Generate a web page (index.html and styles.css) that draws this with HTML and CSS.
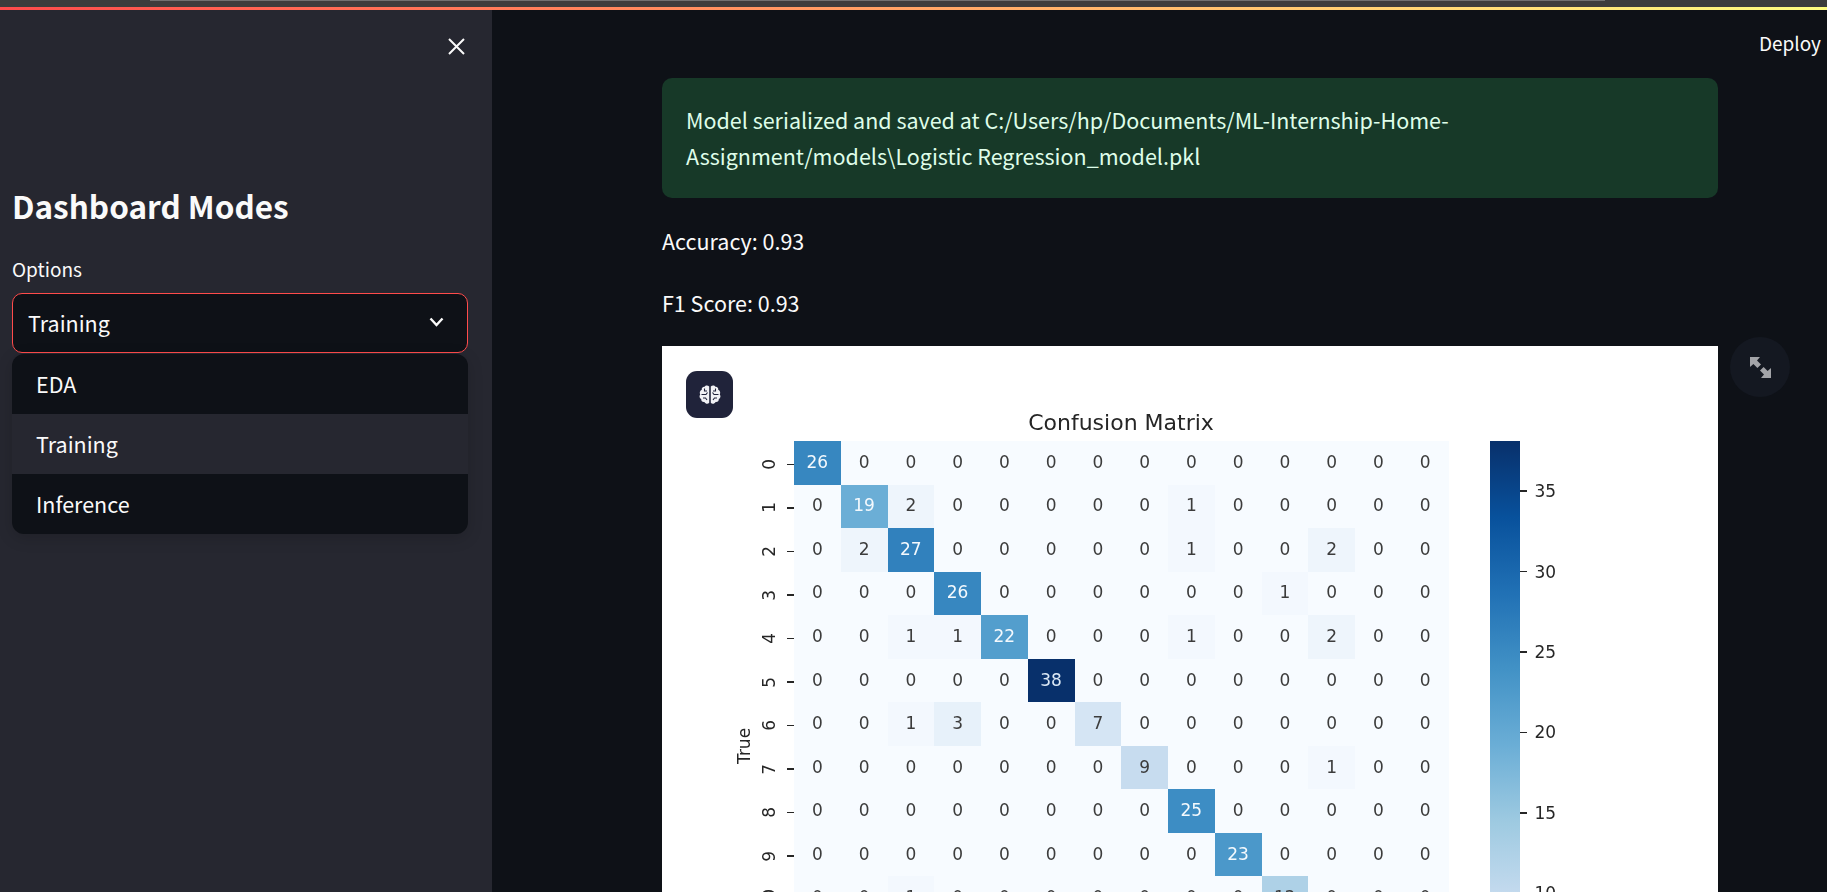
FILE: index.html
```html
<!DOCTYPE html>
<html lang="en">
<head>
  <meta charset="UTF-8">
  <title>Dashboard Modes</title>
  <link rel="stylesheet" href="styles.css">
</head>
<body>

<div class="browserStrip"><div class="browserStripLine"></div></div>
<div class="decoration"></div>

<div class="app">
  <aside class="sidebar">
    <div class="closeRow">
      <svg class="closeIcon" viewBox="0 0 17 17"><path d="M1 1 L16 16 M16 1 L1 16"/></svg>
    </div>
    <h2 class="sidebarTitle">Dashboard Modes</h2>
    <label class="fieldLabel">Options</label>
    <div class="selectBox">
      <span>Training</span>
      <svg class="chevron" viewBox="0 0 15 10"><path d="M1.5 1.5 L7.5 8 L13.5 1.5"/></svg>
    </div>
    <ul class="menu">
      <li class="menuItem">EDA</li>
      <li class="menuItem active">Training</li>
      <li class="menuItem">Inference</li>
    </ul>
  </aside>

  <main class="main">
    <header class="topRow"><span class="deploy">Deploy</span></header>
    <div class="content">
      <div class="alert">Model serialized and saved at C:/Users/hp/Documents/ML-Internship-Home-Assignment/models\Logistic Regression_model.pkl</div>
      <p class="metric">Accuracy: 0.93</p>
      <p class="metric">F1 Score: 0.93</p>

      <div class="plotWrap">
        <div class="plot">
          <div class="brainBtn">
            <svg viewBox="0 0 22 20" class="brainIcon">
              <path class="lobe" d="M10.2 1.6 C8.8 0 6.4 0.2 5.6 1.8 C3.8 1.6 2.4 3 2.8 4.8 C1 5.6 0.2 7.6 1.2 9.4 C0 11 0.4 13.2 2.2 14 C2 16 3.6 17.4 5.4 17 C6.4 19 9 19.4 10.2 17.8 Z"/>
              <path class="lobe" d="M11.8 1.6 C13.2 0 15.6 0.2 16.4 1.8 C18.2 1.6 19.6 3 19.2 4.8 C21 5.6 21.8 7.6 20.8 9.4 C22 11 21.6 13.2 19.8 14 C20 16 18.4 17.4 16.6 17 C15.6 19 13 19.4 11.8 17.8 Z"/>
              <path class="fold" d="M2.5 9.5 H7 L8.5 7.5 M5.5 3.5 V6 H8 M4 13 H6.5 L8 15 M19.5 9.5 H15 L13.5 7.5 M16.5 3.5 V6 H14 M18 13 H15.5 L14 15"/>
            </svg>
          </div>
          <div class="chart">
            <div class="chartTitle">Confusion Matrix</div>
            <div class="chartBody">
              <div class="yLabel">True</div>
              <div class="heatmap">
                <div class="yTick"><span>0</span></div><span class="cell v26">26</span><span class="cell">0</span><span class="cell">0</span><span class="cell">0</span><span class="cell">0</span><span class="cell">0</span><span class="cell">0</span><span class="cell">0</span><span class="cell">0</span><span class="cell">0</span><span class="cell">0</span><span class="cell">0</span><span class="cell">0</span><span class="cell">0</span>
                <div class="yTick"><span>1</span></div><span class="cell">0</span><span class="cell v19">19</span><span class="cell v2">2</span><span class="cell">0</span><span class="cell">0</span><span class="cell">0</span><span class="cell">0</span><span class="cell">0</span><span class="cell v1">1</span><span class="cell">0</span><span class="cell">0</span><span class="cell">0</span><span class="cell">0</span><span class="cell">0</span>
                <div class="yTick"><span>2</span></div><span class="cell">0</span><span class="cell v2">2</span><span class="cell v27">27</span><span class="cell">0</span><span class="cell">0</span><span class="cell">0</span><span class="cell">0</span><span class="cell">0</span><span class="cell v1">1</span><span class="cell">0</span><span class="cell">0</span><span class="cell v2">2</span><span class="cell">0</span><span class="cell">0</span>
                <div class="yTick"><span>3</span></div><span class="cell">0</span><span class="cell">0</span><span class="cell">0</span><span class="cell v26">26</span><span class="cell">0</span><span class="cell">0</span><span class="cell">0</span><span class="cell">0</span><span class="cell">0</span><span class="cell">0</span><span class="cell v1">1</span><span class="cell">0</span><span class="cell">0</span><span class="cell">0</span>
                <div class="yTick"><span>4</span></div><span class="cell">0</span><span class="cell">0</span><span class="cell v1">1</span><span class="cell v1">1</span><span class="cell v22">22</span><span class="cell">0</span><span class="cell">0</span><span class="cell">0</span><span class="cell v1">1</span><span class="cell">0</span><span class="cell">0</span><span class="cell v2">2</span><span class="cell">0</span><span class="cell">0</span>
                <div class="yTick"><span>5</span></div><span class="cell">0</span><span class="cell">0</span><span class="cell">0</span><span class="cell">0</span><span class="cell">0</span><span class="cell v38">38</span><span class="cell">0</span><span class="cell">0</span><span class="cell">0</span><span class="cell">0</span><span class="cell">0</span><span class="cell">0</span><span class="cell">0</span><span class="cell">0</span>
                <div class="yTick"><span>6</span></div><span class="cell">0</span><span class="cell">0</span><span class="cell v1">1</span><span class="cell v3">3</span><span class="cell">0</span><span class="cell">0</span><span class="cell v7">7</span><span class="cell">0</span><span class="cell">0</span><span class="cell">0</span><span class="cell">0</span><span class="cell">0</span><span class="cell">0</span><span class="cell">0</span>
                <div class="yTick"><span>7</span></div><span class="cell">0</span><span class="cell">0</span><span class="cell">0</span><span class="cell">0</span><span class="cell">0</span><span class="cell">0</span><span class="cell">0</span><span class="cell v9">9</span><span class="cell">0</span><span class="cell">0</span><span class="cell">0</span><span class="cell v1">1</span><span class="cell">0</span><span class="cell">0</span>
                <div class="yTick"><span>8</span></div><span class="cell">0</span><span class="cell">0</span><span class="cell">0</span><span class="cell">0</span><span class="cell">0</span><span class="cell">0</span><span class="cell">0</span><span class="cell">0</span><span class="cell v25">25</span><span class="cell">0</span><span class="cell">0</span><span class="cell">0</span><span class="cell">0</span><span class="cell">0</span>
                <div class="yTick"><span>9</span></div><span class="cell">0</span><span class="cell">0</span><span class="cell">0</span><span class="cell">0</span><span class="cell">0</span><span class="cell">0</span><span class="cell">0</span><span class="cell">0</span><span class="cell">0</span><span class="cell v23">23</span><span class="cell">0</span><span class="cell">0</span><span class="cell">0</span><span class="cell">0</span>
                <div class="yTick"><span>10</span></div><span class="cell">0</span><span class="cell">0</span><span class="cell v1">1</span><span class="cell">0</span><span class="cell">0</span><span class="cell">0</span><span class="cell">0</span><span class="cell">0</span><span class="cell">0</span><span class="cell">0</span><span class="cell v12">12</span><span class="cell">0</span><span class="cell">0</span><span class="cell">0</span>
              </div>
              <div class="colorbar"></div>
              <div class="cbarTicks">
                <span class="cbarTick">35</span>
                <span class="cbarTick">30</span>
                <span class="cbarTick">25</span>
                <span class="cbarTick">20</span>
                <span class="cbarTick">15</span>
                <span class="cbarTick">10</span>
              </div>
            </div>
          </div>
        </div>
        <div class="expandBtn">
          <svg viewBox="0 0 21 21" class="expandIcon">
            <path d="M0 0 H10 L7 3.4 L11 7.4 L7.4 11 L3.4 7 L0 10 Z"/>
            <path d="M21 21 H11 L14 17.6 L10 13.6 L13.6 10 L17.6 14 L21 11 Z"/>
          </svg>
        </div>
      </div>
    </div>
  </main>
</div>

</body>
</html>
```

FILE: styles.css
```css
html, body {
  margin: 0;
  padding: 0;
  height: 892px;
  overflow: hidden;
  background: #0e1117;
  font-family: "Noto Sans CJK SC", "Noto Sans", sans-serif;
  color: #fafafa;
}

.browserStrip {
  height: 7px;
  background: #3c3c3c;
}

.browserStripLine {
  height: 1px;
  margin-left: 150px;
  width: 1455px;
  background: #707070;
}

.decoration {
  height: 3px;
  background: linear-gradient(90deg, #ff4b4b, #fffd80);
}

.app {
  display: flex;
  height: 882px;
}

/* sidebar */
.sidebar {
  width: 492px;
  flex: none;
  box-sizing: border-box;
  padding: 0 24px 0 12px;
  background: #262730;
}

.closeRow {
  height: 72px;
  display: flex;
  align-items: center;
  justify-content: flex-end;
  padding-right: 3px;
}

.closeIcon {
  width: 17px;
  height: 17px;
}

.closeIcon path {
  stroke: #fafafa;
  stroke-width: 2;
  fill: none;
}

.sidebarTitle {
  margin: 101px 0 0;
  font-size: 31.5px;
  line-height: 44px;
  font-weight: 600;
}

.fieldLabel {
  display: block;
  margin: 30px 0 12px;
  font-size: 19px;
  line-height: 24px;
}

.selectBox {
  height: 60px;
  box-sizing: border-box;
  display: flex;
  align-items: center;
  justify-content: space-between;
  padding: 0 23px 2px 15px;
  border: 1px solid #ff4b4b;
  border-radius: 10px;
  background: #0e1117;
  font-size: 21.5px;
}

.chevron {
  width: 15px;
  height: 10px;
}

.chevron path {
  stroke: #fafafa;
  stroke-width: 2.4;
  fill: none;
}

.menu {
  list-style: none;
  margin: 1px 0 0;
  padding: 0;
  border-radius: 12px;
  overflow: hidden;
  background: #0e1117;
  box-shadow: 0 4px 16px rgba(0, 0, 0, 0.16);
}

.menuItem {
  height: 60px;
  padding-left: 24px;
  font-size: 21.5px;
  line-height: 60px;
}

.menuItem.active {
  background: #262730;
}

/* main area */
.main {
  flex: 1;
  min-width: 0;
  overflow: hidden;
}

.topRow {
  height: 68px;
  box-sizing: border-box;
  display: flex;
  align-items: center;
  justify-content: flex-end;
  padding: 0 6px 3px 0;
}

.deploy {
  font-size: 19px;
}

.content {
  width: 1056px;
  margin-left: 170px;
}

.alert {
  box-sizing: border-box;
  height: 120px;
  padding: 24px 24px;
  border-radius: 10px;
  background: #173928;
  color: #dffde9;
  font-size: 21.5px;
  line-height: 36px;
}

.metric {
  margin: 26px 0 0;
  font-size: 21.5px;
  line-height: 36px;
}

.alert + .metric {
  margin-top: 25px;
}

.plotWrap {
  position: relative;
  margin-top: 25px;
}

.plot {
  position: relative;
  height: 546px;
  overflow: hidden;
  background: #ffffff;
}

.brainBtn {
  position: absolute;
  top: 25px;
  left: 24px;
  width: 47px;
  height: 47px;
  display: flex;
  align-items: center;
  justify-content: center;
  border-radius: 11px;
  background: #20233a;
}

.brainIcon {
  width: 22px;
  height: 20px;
}

.brainIcon .lobe {
  fill: #f2f2f5;
}

.brainIcon .fold {
  fill: none;
  stroke: #20233a;
  stroke-width: 1.1;
}

.expandBtn {
  position: absolute;
  top: -9px;
  left: 1068px;
  width: 60px;
  height: 60px;
  display: flex;
  align-items: center;
  justify-content: center;
  border-radius: 50%;
  background: #141821;
}

.expandIcon {
  width: 21px;
  height: 21px;
  fill: #a3a4a8;
}

/* confusion matrix */
.chart {
  padding: 64px 0 0 72px;
  font-family: "DejaVu Sans", sans-serif;
  color: #262626;
  filter: blur(0.4px);
}

.chartTitle {
  width: 654px;
  margin-left: 60px;
  height: 31px;
  font-size: 22px;
  line-height: 25px;
  text-align: center;
}

.chartBody {
  display: flex;
  align-items: flex-start;
}

.yLabel {
  width: 20px;
  height: 610px;
  line-height: 20px;
  writing-mode: vertical-rl;
  transform: rotate(180deg);
  text-align: center;
  font-size: 17px;
}

.heatmap {
  display: grid;
  grid-template-columns: 40px repeat(14, 46.75px);
  grid-template-rows: repeat(14, 43.55px);
  height: 610px;
  margin-right: 41px;
  background: linear-gradient(90deg, #fff 40px, #f7fbff 40px);
}

.yTick {
  display: flex;
  align-items: center;
  justify-content: flex-end;
  gap: 9px;
  padding-top: 3px;
  box-sizing: border-box;
  font-size: 17px;
}

.yTick span {
  writing-mode: vertical-rl;
  transform: rotate(180deg);
  line-height: 17px;
}

.yTick::after {
  content: "";
  width: 7px;
  height: 1.5px;
  background: #262626;
}

.cell {
  display: flex;
  align-items: center;
  justify-content: center;
  padding-bottom: 2px;
  box-sizing: border-box;
  font-size: 17px;
  color: #3c3c3c;
}

.v1 { background: #f3f8fe; }
.v2 { background: #eef5fc; }
.v3 { background: #e7f1fa; }
.v7 { background: #d5e5f4; }
.v9 { background: #c7dcef; }
.v12 { background: #aed1e7; }
.v19 { background: #6baed6; color: #f4f9fd; }
.v22 { background: #539ecd; color: #f4f9fd; }
.v23 { background: #4b98ca; color: #f4f9fd; }
.v25 { background: #3d8dc4; color: #f4f9fd; }
.v26 { background: #3787c0; color: #f4f9fd; }
.v27 { background: #3181bd; color: #f4f9fd; }
.v38 { background: #08306b; color: #dbe8f5; }

.colorbar {
  width: 30px;
  height: 610px;
  background: linear-gradient(180deg, #08306b 0%, #08519c 12.5%, #2171b5 25%, #4292c6 37.5%, #6baed6 50%, #9ecae1 62.5%, #c6dbef 75%, #deebf7 87.5%, #f7fbff 100%);
}

.cbarTicks {
  display: flex;
  flex-direction: column;
  padding-top: 10px;
  font-size: 17px;
}

.cbarTick {
  display: flex;
  align-items: center;
  gap: 8px;
  height: 80.4px;
}

.cbarTick::before {
  content: "";
  width: 7px;
  height: 1.5px;
  background: #262626;
}
```
